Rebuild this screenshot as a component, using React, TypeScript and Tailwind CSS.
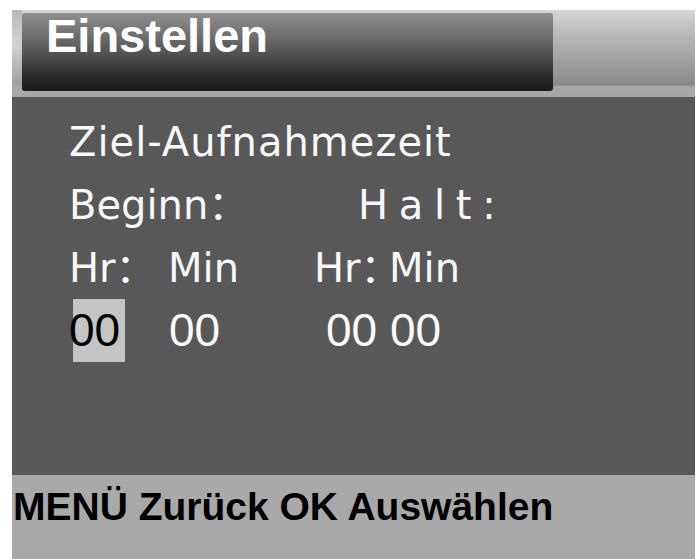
export default function App() {
  const line =
    "flex h-[63px] whitespace-pre font-['DejaVu_Sans','Noto_Sans_CJK_SC',sans-serif] text-[40px] leading-[63px] text-[#f8f8f8]";
  const digits =
    "whitespace-pre font-['Liberation_Sans',Arial,sans-serif] text-[46px] leading-[63px]";
  const colon = "tracking-[-20px]";
  return (
    <div className="h-[559px] w-[698px] overflow-hidden bg-white pt-[10px]">
      <div className="ml-[12px] flex h-[549px] w-[683px] flex-col">
        {/* header */}
        <div className="flex h-[87px] bg-[linear-gradient(to_bottom,#d6d6d6_0%,#b2b3b4_35%,#909192_78%,#87888a_86%,#a7a8aa_88%,#a5a6a8_100%)]">
          <div className="w-[10px] bg-[linear-gradient(to_bottom,#b8b8b8_0%,#d2d2d2_40%,#a0a0a0_85%,#a7a8aa_88%,#a5a6a8_100%)]" />
          <div className="mt-[3px] h-[78px] w-[531px] rounded-[3px] bg-[linear-gradient(to_bottom,#8e8e8e_0%,#6e6e6e_30%,#474747_60%,#262626_85%,#1a1a1a_100%)] pl-[24px]">
            <span className="block font-['Liberation_Sans',Arial,sans-serif] text-[47px] leading-[45px] font-bold text-white">
              Einstellen
            </span>
          </div>
          <div className="flex-1" />
        </div>

        {/* body */}
        <div className="flex-1 bg-[#585858] pt-[14px] pl-[57px]">
          <div className={line + " tracking-[1px]"}>Ziel-Aufnahmezeit</div>
          <div className={line}>
            <span className="w-[289px]">
              Beginn<span className={colon}>：</span>
            </span>
            <span className="[word-spacing:-2px]">H a l t :</span>
          </div>
          <div className={line}>
            <span className="w-[99px]">
              Hr<span className={colon}>：</span>
            </span>
            <span className="w-[146px]">Min</span>
            <span className="w-[75px]">
              Hr<span className={colon}>：</span>
            </span>
            <span>Min</span>
          </div>
          <div className="-mt-[1px] ml-[4px] flex h-[63px]">
            <span className={digits + " inline-block h-[63px] w-[52px] bg-[#c4c4c4] -indent-1 text-black"}>00</span>
            <span className={digits + " ml-[44px] w-[157px] text-[#fafafa]"}>00</span>
            <span className={digits + " text-[#fafafa]"}>00 00</span>
          </div>
        </div>

        {/* footer */}
        <div className="h-[84px] bg-[#a9a9a9] pt-[12px] pl-[1px]">
          <span className="whitespace-pre font-['Liberation_Sans',Arial,sans-serif] text-[39px] leading-[39px] font-bold text-black">
            MENÜ Zurück OK Auswählen
          </span>
        </div>
      </div>
    </div>
  );
}
